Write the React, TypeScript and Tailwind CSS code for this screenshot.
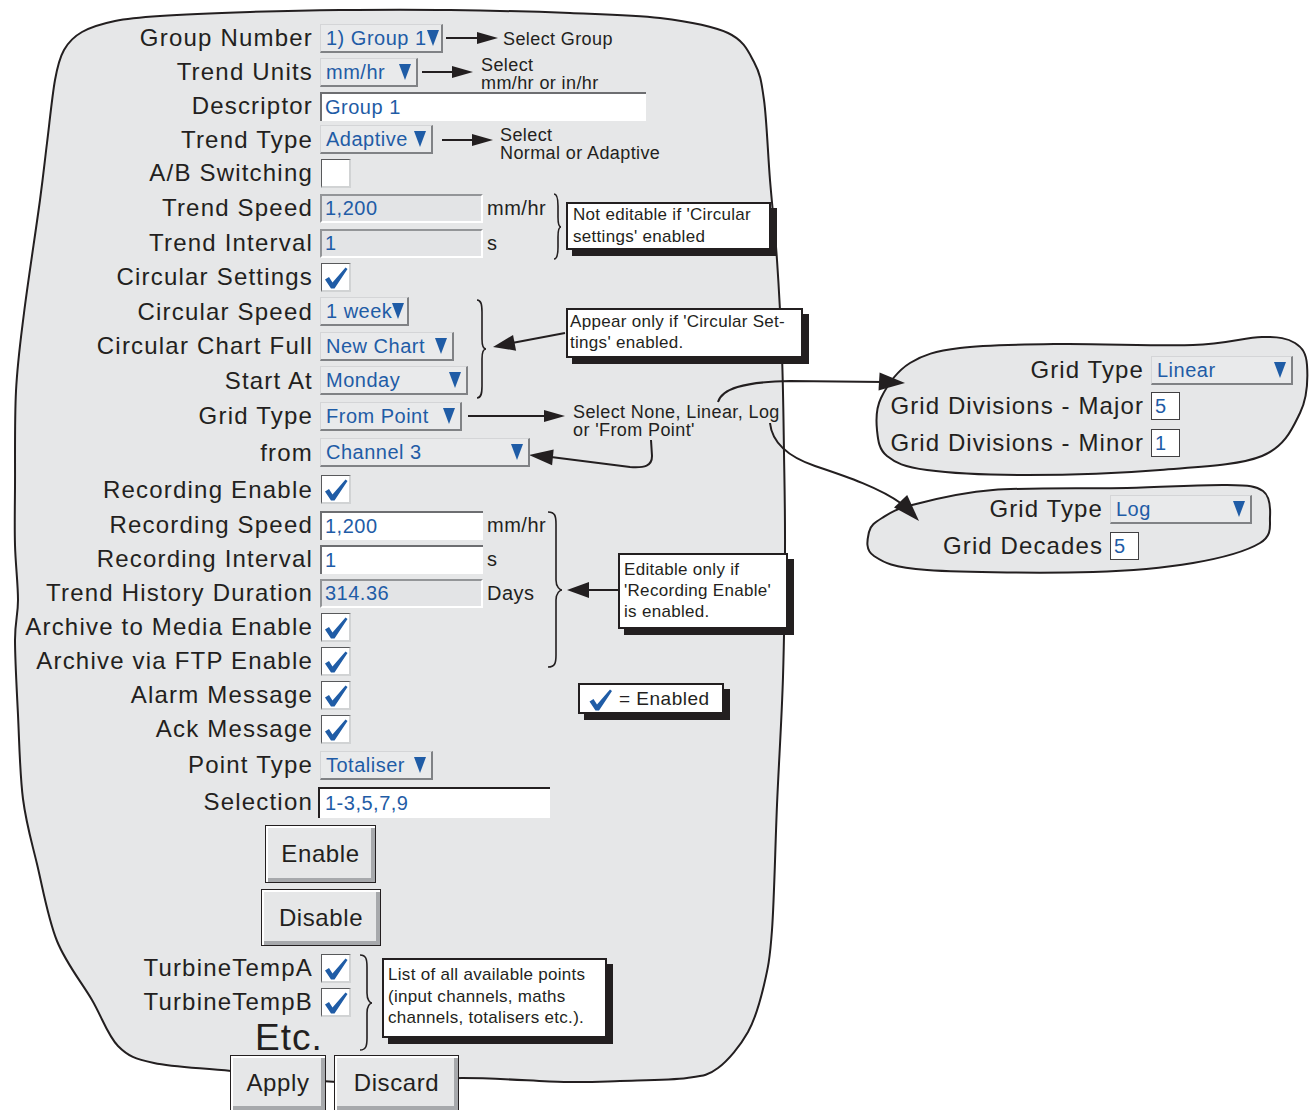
import React from "react";

const BLUE = "text-[#1f5ca6]";
const INK = "#231f20";

function smooth(pts: number[][]): string {
  const n = pts.length;
  const f = (v: number) => v.toFixed(1);
  let d = `M${f(pts[0][0])},${f(pts[0][1])}`;
  for (let i = 0; i < n; i++) {
    const p0 = pts[(i - 1 + n) % n];
    const p1 = pts[i];
    const p2 = pts[(i + 1) % n];
    const p3 = pts[(i + 2) % n];
    const c1x = p1[0] + (p2[0] - p0[0]) / 6;
    const c1y = p1[1] + (p2[1] - p0[1]) / 6;
    const c2x = p2[0] - (p3[0] - p1[0]) / 6;
    const c2y = p2[1] - (p3[1] - p1[1]) / 6;
    d += ` C${f(c1x)},${f(c1y)} ${f(c2x)},${f(c2y)} ${f(p2[0])},${f(p2[1])}`;
  }
  return d + " Z";
}

function head(tx: number, ty: number, dx: number, dy: number, len = 22, hw = 7): string {
  const m = Math.hypot(dx, dy);
  const ux = dx / m;
  const uy = dy / m;
  const bx = tx - ux * len;
  const by = ty - uy * len;
  return `${tx},${ty} ${bx - uy * hw},${by + ux * hw} ${bx + uy * hw},${by - ux * hw}`;
}

function brace(xe: number, xm: number, xt: number, y0: number, y1: number, yt: number): string {
  return `M${xe},${y0} C${xm - 1},${y0} ${xm},${y0 + 4} ${xm},${y0 + 12} L${xm},${yt - 10} C${xm},${yt - 3} ${xt - 2},${yt} ${xt},${yt} C${xt - 2},${yt} ${xm},${yt + 3} ${xm},${yt + 10} L${xm},${y1 - 12} C${xm},${y1 - 4} ${xm - 1},${y1} ${xe},${y1}`;
}

const MAIN = [
  [40, 200], [47, 143], [55, 80], [64, 50], [82, 32], [115, 21], [160, 16], [250, 12], [340, 10],
  [450, 10], [570, 13], [660, 18], [728, 33], [754, 62], [764, 100], [770, 180], [777, 260],
  [782, 356], [784, 453], [785, 549], [783, 677], [777, 805], [772, 930], [764, 985], [748, 1032],
  [718, 1068], [687, 1078], [620, 1081], [564, 1082], [462, 1078], [340, 1082], [231, 1071],
  [154, 1063], [118, 1046], [92, 1000], [57, 941], [37, 864], [23, 799], [18, 715], [15, 640],
  [18, 600], [15, 545], [15, 488], [16, 391], [24, 313],
];

const BLOB_A = [
  [910, 363], [960, 348], [1060, 344], [1193, 345], [1262, 337], [1295, 343], [1307, 365],
  [1300, 413], [1262, 456], [1160, 470], [1027, 475], [927, 470], [887, 456], [877, 430], [881, 398],
];

const BLOB_B = [
  [912, 505], [993, 490], [1127, 488], [1227, 485], [1263, 491], [1270, 517], [1260, 543],
  [1193, 563], [1093, 572], [927, 570], [874, 556], [869, 532], [882, 518],
];

function Tri() {
  return (
    <svg width="12" height="16" viewBox="0 0 12 16" className="shrink-0">
      <polygon points="0,0 12,0 6,16" fill="#1f5ca6" />
    </svg>
  );
}

function CheckMark({ w = 27, h = 26 }: { w?: number; h?: number }) {
  return (
    <svg width={w} height={h} viewBox="0 0 27 26" className="shrink-0">
      <path d="M3,15.5 L7,13 L10.5,18.5 L23.5,3.5 L25.5,5 L12.5,24.5 L9,24.5 Z" fill="#1f5ca6" />
    </svg>
  );
}

function Checkbox({ checked }: { checked?: boolean }) {
  return (
    <div className="ml-[1px] w-[30px] h-[29px] bg-white border-t border-l border-[#58595b] border-r-2 border-b-2 border-r-[#d1d3d4] border-b-[#d1d3d4]">
      {checked ? <CheckMark /> : null}
    </div>
  );
}

function Dropdown({ w, text }: { w: string; text: string }) {
  return (
    <div
      className={`flex items-center justify-between h-[29px] pl-[5px] pr-[5px] bg-[#e9eaeb] border-t border-l border-[#d4d5d7] border-r-2 border-b-2 border-r-[#808285] border-b-[#808285] ${w}`}
    >
      <span className={`text-[20px] leading-none tracking-[0.5px] whitespace-nowrap ${BLUE}`}>{text}</span>
      <Tri />
    </div>
  );
}

function Field({ w, text, grey }: { w: string; text: string; grey?: boolean }) {
  const cls = grey
    ? "bg-[#e3e4e6] border-t-2 border-l-2 border-[#939598] border-r-2 border-b-2 border-r-white border-b-white"
    : "bg-white border-t-2 border-l-2 border-[#6d6e71]";
  return (
    <div className={`flex items-center h-[29px] pl-[3px] ${cls} ${w}`}>
      <span className={`text-[20px] leading-none tracking-[0.5px] whitespace-nowrap ${BLUE}`}>{text}</span>
    </div>
  );
}

function Unit({ children }: { children: React.ReactNode }) {
  return <span className="ml-[4px] text-[20px] leading-none tracking-[0.5px]">{children}</span>;
}

function HArrow({ w, ml }: { w: number; ml: string }) {
  return (
    <svg width={w} height="14" viewBox={`0 0 ${w} 14`} className={`shrink-0 ${ml}`}>
      <line x1="0" y1="7" x2={w - 20} y2="7" stroke={INK} strokeWidth="2" />
      <polygon points={`${w - 21},1 ${w},7 ${w - 21},13`} fill={INK} />
    </svg>
  );
}

function Note({ ml, mt, lines }: { ml: string; mt: string; lines: string[] }) {
  return (
    <div className={`${ml} ${mt} text-[18px] leading-[18px] tracking-[0.4px] whitespace-nowrap`}>
      {lines.map((l, i) => (
        <div key={i}>{l}</div>
      ))}
    </div>
  );
}

function Row({ h, label, children }: { h: string; label: string; children?: React.ReactNode }) {
  return (
    <div className={`flex items-center ${h}`}>
      <div className="w-[313px] shrink-0 text-right text-[24px] leading-none tracking-[1.2px] whitespace-nowrap">{label}</div>
      <div className="ml-[7px] flex items-center">{children}</div>
    </div>
  );
}

function Button({ cls, label }: { cls: string; label: string }) {
  return (
    <div
      className={`flex items-center justify-center bg-[#e6e7e8] border border-[#231f20] shadow-[inset_2px_2px_0_#ffffff,inset_-4px_-4px_0_#a7a9ac] ${cls}`}
    >
      <span className="text-[24px] leading-none tracking-[0.6px]">{label}</span>
    </div>
  );
}

function SmallBox({ text }: { text: string }) {
  return (
    <div className="flex items-center w-[29px] h-[28px] pl-[3px] bg-white border border-[#414042]">
      <span className={`text-[20px] leading-none ${BLUE}`}>{text}</span>
    </div>
  );
}

function SideRow({ h, lw, gap, label, children }: { h: string; lw: string; gap: string; label: string; children: React.ReactNode }) {
  return (
    <div className={`flex items-center ${h}`}>
      <div className={`${lw} shrink-0 text-right text-[24px] leading-none tracking-[1.1px] whitespace-nowrap`}>{label}</div>
      <div className={`${gap} flex items-center`}>{children}</div>
    </div>
  );
}

const CALLOUT =
  "absolute bg-white border-2 border-[#231f20] shadow-[6px_6px_0_#231f20] text-[17px] tracking-[0.3px] whitespace-nowrap";

export default function App() {
  return (
    <div className="relative w-[1309px] h-[1110px] overflow-hidden bg-white text-[#231f20] font-['Liberation_Sans','Arial',sans-serif]">
      <svg className="absolute left-0 top-0" width="1309" height="1110" viewBox="0 0 1309 1110">
        <path d={smooth(MAIN)} fill="#e6e7e8" stroke={INK} strokeWidth="2" />
        <path d={smooth(BLOB_A)} fill="#e6e7e8" stroke={INK} strokeWidth="2" />
        <path d={smooth(BLOB_B)} fill="#e6e7e8" stroke={INK} strokeWidth="2" />

        {/* Linear curve */}
        <path d="M718,402 C722,389 742,382 790,381 L884,382" fill="none" stroke={INK} strokeWidth="2" />
        <polygon points={head(905, 383, 1, 0.06, 26, 9)} fill={INK} />
        {/* Log curve */}
        <path d="M770,423 C772,442 786,456 815,466 C848,477 880,488 902,504" fill="none" stroke={INK} strokeWidth="2" />
        <polygon points={head(919, 521, 0.68, 0.73, 27, 9)} fill={INK} />
        {/* From point curve */}
        <path d="M651,440 L652,456 C652,466 645,468 630,467 L551,457" fill="none" stroke={INK} strokeWidth="2" />
        <polygon points={head(529, 455, -1, -0.1, 24, 8)} fill={INK} />
        {/* Appear arrow */}
        <line x1="565" y1="333" x2="512" y2="343" stroke={INK} strokeWidth="2" />
        <polygon points={head(493, 347, -72, 14, 22, 8)} fill={INK} />
        {/* Editable arrow */}
        <line x1="618" y1="590" x2="588" y2="590" stroke={INK} strokeWidth="2" />
        <polygon points={head(567, 590, -1, 0, 22, 8)} fill={INK} />

        {/* braces */}
        <path d={brace(554, 558, 561, 194, 259, 227)} fill="none" stroke={INK} strokeWidth="1.6" />
        <path d={brace(477, 482, 486, 300, 398, 349)} fill="none" stroke={INK} strokeWidth="1.6" />
        <path d={brace(548, 556, 562, 512, 667, 590)} fill="none" stroke={INK} strokeWidth="1.6" />
        <path d={brace(360, 367, 372, 955, 1050, 1003)} fill="none" stroke={INK} strokeWidth="1.6" />
      </svg>

      {/* Main form */}
      <div className="relative flex flex-col pt-[21px]">
        <Row h="h-[34px]" label="Group Number">
          <Dropdown w="w-[123px]" text="1) Group 1" />
          <HArrow w={52} ml="ml-[3px]" />
          <Note ml="ml-[5px]" mt="mt-[2px]" lines={["Select Group"]} />
        </Row>
        <Row h="h-[34px]" label="Trend Units">
          <Dropdown w="w-[98px]" text="mm/hr" />
          <HArrow w={51} ml="ml-[4px]" />
          <Note ml="ml-[8px]" mt="mt-[4px]" lines={["Select", "mm/hr or in/hr"]} />
        </Row>
        <Row h="h-[34px]" label="Descriptor">
          <Field w="w-[326px]" text="Group 1" />
        </Row>
        <Row h="h-[33px]" label="Trend Type">
          <Dropdown w="w-[113px]" text="Adaptive" />
          <HArrow w={51} ml="ml-[9px]" />
          <Note ml="ml-[7px]" mt="mt-[9px]" lines={["Select", "Normal or Adaptive"]} />
        </Row>
        <Row h="h-[34px]" label="A/B Switching">
          <Checkbox />
        </Row>
        <Row h="h-[36px]" label="Trend Speed">
          <Field w="w-[163px]" text="1,200" grey />
          <Unit>mm/hr</Unit>
        </Row>
        <Row h="h-[34px]" label="Trend Interval">
          <Field w="w-[163px]" text="1" grey />
          <Unit>s</Unit>
        </Row>
        <Row h="h-[34px]" label="Circular Settings">
          <Checkbox checked />
        </Row>
        <Row h="h-[35px]" label="Circular Speed">
          <Dropdown w="w-[89px]" text="1 week" />
        </Row>
        <Row h="h-[34px]" label="Circular Chart Full">
          <Dropdown w="w-[134px]" text="New Chart" />
        </Row>
        <Row h="h-[35px]" label="Start At">
          <Dropdown w="w-[148px]" text="Monday" />
        </Row>
        <Row h="h-[36px]" label="Grid Type">
          <Dropdown w="w-[142px]" text="From Point" />
          <HArrow w={97} ml="ml-[6px]" />
          <Note ml="ml-[8px]" mt="mt-[10px]" lines={["Select None, Linear, Log", "or 'From Point'"]} />
        </Row>
        <Row h="h-[37px]" label="from">
          <Dropdown w="w-[210px]" text="Channel 3" />
        </Row>
        <Row h="h-[37px]" label="Recording Enable">
          <Checkbox checked />
        </Row>
        <Row h="h-[34px]" label="Recording Speed">
          <Field w="w-[163px]" text="1,200" />
          <Unit>mm/hr</Unit>
        </Row>
        <Row h="h-[34px]" label="Recording Interval">
          <Field w="w-[163px]" text="1" />
          <Unit>s</Unit>
        </Row>
        <Row h="h-[34px]" label="Trend History Duration">
          <Field w="w-[163px]" text="314.36" grey />
          <Unit>Days</Unit>
        </Row>
        <Row h="h-[34px]" label="Archive to Media Enable">
          <Checkbox checked />
        </Row>
        <Row h="h-[34px]" label="Archive via FTP Enable">
          <Checkbox checked />
        </Row>
        <Row h="h-[34px]" label="Alarm Message">
          <Checkbox checked />
        </Row>
        <Row h="h-[34px]" label="Ack Message">
          <Checkbox checked />
        </Row>
        <Row h="h-[38px]" label="Point Type">
          <Dropdown w="w-[113px]" text="Totaliser" />
        </Row>
        <Row h="h-[36px]" label="Selection">
          <div className="ml-[-2px] flex items-center w-[232px] h-[31px] pl-[5px] bg-white border-t-2 border-l-2 border-[#231f20]">
            <span className={`text-[20px] leading-none tracking-[0.5px] ${BLUE}`}>1-3,5,7,9</span>
          </div>
        </Row>

        <Button cls="mt-[5px] ml-[265px] w-[111px] h-[58px]" label="Enable" />
        <Button cls="mt-[6px] ml-[261px] w-[120px] h-[57px]" label="Disable" />

        <div className="mt-[5px]">
          <Row h="h-[34px]" label="TurbineTempA">
            <Checkbox checked />
          </Row>
          <Row h="h-[34px]" label="TurbineTempB">
            <Checkbox checked />
          </Row>
        </div>
        <div className="h-[36px] ml-[255px] text-[37px] leading-none tracking-[1px]">Etc.</div>
        <div className="flex ml-[230px] gap-[8px]">
          <Button cls="w-[96px] h-[56px]" label="Apply" />
          <Button cls="w-[125px] h-[56px]" label="Discard" />
        </div>
      </div>

      {/* Callouts */}
      <div className={`${CALLOUT} left-[566px] top-[202px] w-[205px] h-[48px] pl-[5px] leading-[22px]`}>
        Not editable if 'Circular
        <br />
        settings' enabled
      </div>
      <div className={`${CALLOUT} left-[566px] top-[308px] w-[237px] h-[50px] pl-[2px] pt-[1px] leading-[21px]`}>
        Appear only if 'Circular Set-
        <br />
        tings' enabled.
      </div>
      <div className={`${CALLOUT} left-[618px] top-[553px] w-[170px] h-[76px] pl-[4px] pt-[4px] leading-[21px]`}>
        Editable only if
        <br />
        'Recording Enable'
        <br />
        is enabled.
      </div>
      <div className={`${CALLOUT} left-[578px] top-[683px] w-[146px] h-[31px] flex items-center pl-[4px]`}>
        <CheckMark w={32} h={26} />
        <span className="ml-[3px] text-[19px] leading-none tracking-[0.5px]">= Enabled</span>
      </div>
      <div className={`${CALLOUT} left-[382px] top-[958px] w-[225px] h-[80px] pl-[4px] pt-[4px] leading-[21.5px]`}>
        List of all available points
        <br />
        (input channels, maths
        <br />
        channels, totalisers etc.).
      </div>

      {/* Right blob A content */}
      <div className="absolute left-[880px] top-[352px] flex flex-col">
        <SideRow h="h-[36px]" lw="w-[264px]" gap="ml-[7px]" label="Grid Type">
          <Dropdown w="w-[142px]" text="Linear" />
        </SideRow>
        <SideRow h="h-[36px]" lw="w-[264px]" gap="ml-[7px]" label="Grid Divisions - Major">
          <SmallBox text="5" />
        </SideRow>
        <SideRow h="h-[37px]" lw="w-[264px]" gap="ml-[7px]" label="Grid Divisions - Minor">
          <SmallBox text="1" />
        </SideRow>
      </div>

      {/* Right blob B content */}
      <div className="absolute left-[880px] top-[491px] flex flex-col">
        <SideRow h="h-[36px]" lw="w-[223px]" gap="ml-[7px]" label="Grid Type">
          <Dropdown w="w-[142px]" text="Log" />
        </SideRow>
        <SideRow h="h-[37px]" lw="w-[223px]" gap="ml-[7px]" label="Grid Decades">
          <SmallBox text="5" />
        </SideRow>
      </div>
    </div>
  );
}
